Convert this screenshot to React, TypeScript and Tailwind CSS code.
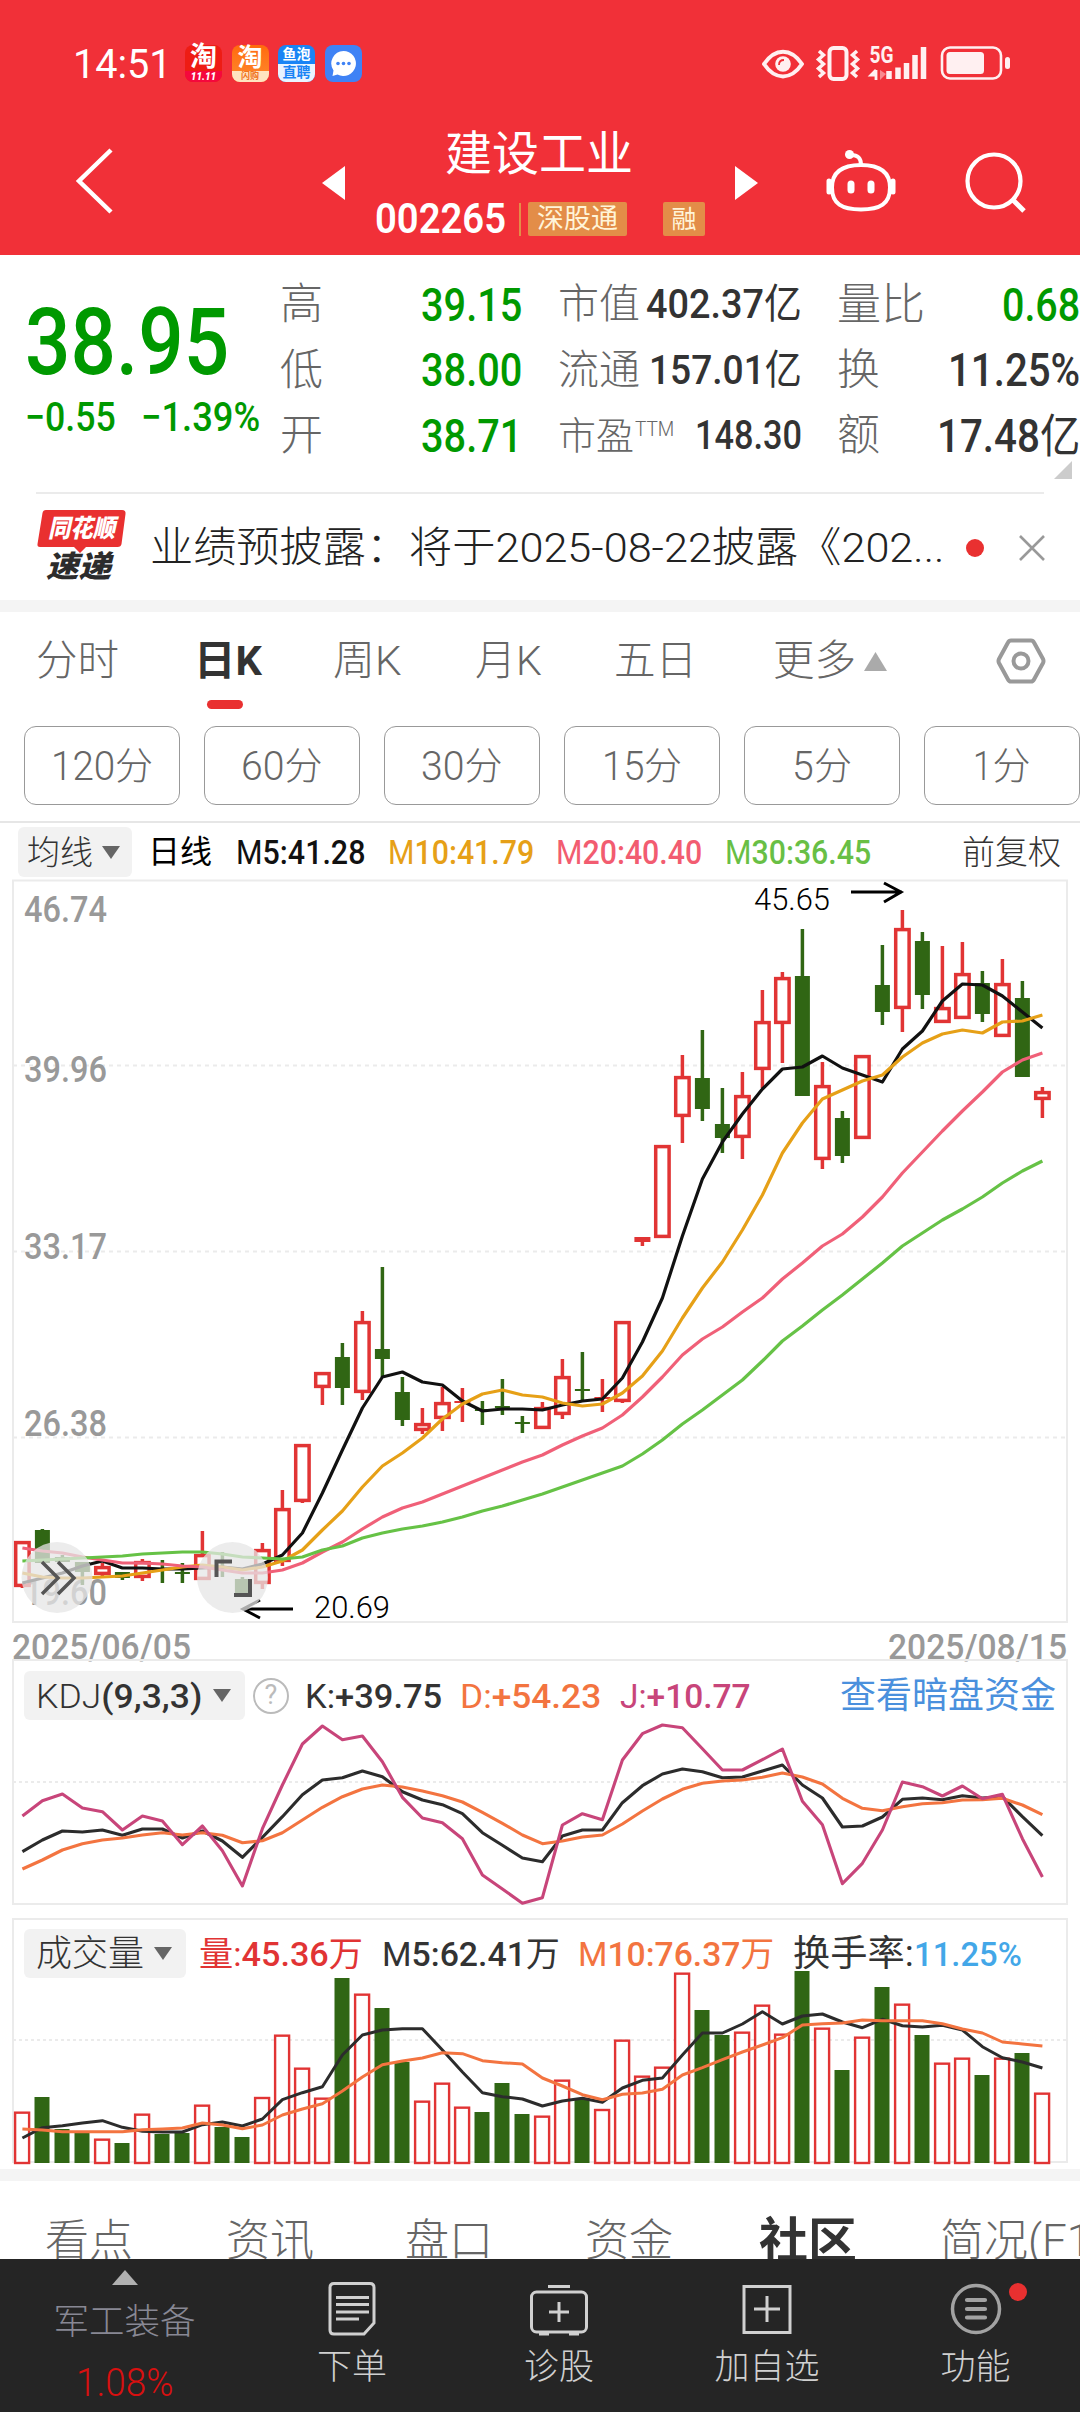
import { useLayoutEffect, useRef, useState } from 'react';
import type { ReactNode } from 'react';
import clsx from 'clsx';

// [cor, máxima, topo, base, mínima] -> r = alta, g = baixa
type Candle = ['r' | 'g', number, number, number, number];

const CANDLES: Candle[] = [
  ['r', 1541, 1541, 1587, 1588], ['g', 1529, 1530, 1563, 1563], ['g', 1555, 1557, 1562, 1562], ['g', 1562, 1562, 1572, 1585],
  ['r', 1563, 1566, 1575, 1576], ['g', 1572, 1572, 1578, 1580], ['r', 1559, 1561, 1578, 1581], ['g', 1560, 1568, 1570, 1583],
  ['g', 1563, 1572, 1574, 1583], ['r', 1531, 1554, 1580, 1580], ['g', 1552, 1561, 1563, 1577], ['g', 1577, 1579, 1594, 1594],
  ['r', 1543, 1549, 1584, 1589], ['r', 1490, 1508, 1562, 1566], ['r', 1444, 1444, 1502, 1503], ['r', 1372, 1372, 1388, 1405],
  ['g', 1343, 1357, 1388, 1405], ['r', 1311, 1321, 1393, 1400], ['g', 1267, 1349, 1359, 1377], ['g', 1377, 1392, 1420, 1426],
  ['r', 1408, 1423, 1431, 1434], ['r', 1387, 1402, 1419, 1431], ['r', 1388, 1401, 1403, 1422], ['g', 1401, 1409, 1411, 1425],
  ['g', 1379, 1406, 1408, 1415], ['g', 1416, 1422, 1424, 1433], ['r', 1402, 1407, 1429, 1429], ['r', 1359, 1376, 1415, 1419],
  ['g', 1352, 1389, 1391, 1400], ['r', 1379, 1397, 1399, 1412], ['r', 1321, 1321, 1402, 1403], ['r', 1237, 1237, 1242, 1246],
  ['r', 1145, 1145, 1238, 1238], ['r', 1055, 1076, 1117, 1143], ['g', 1030, 1078, 1109, 1121], ['g', 1088, 1124, 1138, 1153],
  ['r', 1072, 1095, 1138, 1159], ['r', 990, 1021, 1070, 1088], ['r', 972, 977, 1024, 1063], ['g', 929, 976, 1096, 1096],
  ['r', 1062, 1085, 1160, 1169], ['g', 1111, 1118, 1156, 1163], ['r', 1055, 1055, 1139, 1139], ['g', 945, 985, 1012, 1025],
  ['r', 910, 928, 1009, 1032], ['g', 932, 941, 995, 1009], ['r', 946, 1007, 1023, 1023], ['r', 942, 973, 1019, 1019],
  ['g', 971, 983, 1014, 1022], ['r', 959, 983, 1037, 1037], ['g', 981, 998, 1077, 1077], ['r', 1087, 1091, 1100, 1118],
];

const MA5 = [
  1583, 1578, 1573, 1566, 1561, 1568, 1568, 1569, 1569, 1568, 1567, 1569, 1564, 1555, 1533, 1493, 1450, 1408, 1377, 1372, 1382, 1385, 1401,
  1411, 1409, 1409, 1410, 1405, 1401, 1399, 1378, 1342, 1298, 1236, 1179, 1142, 1114, 1089, 1069, 1067, 1056, 1068, 1075, 1082, 1049, 1031,
  1001, 984, 985, 996, 1012, 1028,
];
const MA10 = [
  1573, 1577, 1578, 1578, 1577, 1576, 1573, 1570, 1567, 1565, 1567, 1570, 1567, 1561, 1550, 1530, 1511, 1487, 1466, 1453, 1438, 1419, 1404,
  1394, 1390, 1395, 1397, 1403, 1406, 1404, 1393, 1376, 1351, 1318, 1288, 1262, 1230, 1195, 1153, 1123, 1099, 1090, 1081, 1075, 1057, 1043,
  1034, 1030, 1033, 1022, 1021, 1015,
];
const MA20 = [
  1548, 1551, 1553, 1557, 1560, 1563, 1563, 1564, 1566, 1567, 1570, 1573, 1573, 1570, 1563, 1552, 1542, 1529, 1517, 1508, 1502, 1494, 1486,
  1478, 1470, 1462, 1455, 1445, 1436, 1428, 1415, 1397, 1377, 1355, 1339, 1327, 1312, 1298, 1279, 1263, 1246, 1234, 1217, 1197, 1173, 1152,
  1131, 1111, 1092, 1072, 1060, 1053,
];
const MA30 = [
  1561, 1560, 1559, 1558, 1557, 1556, 1554, 1553, 1552, 1552, 1554, 1557, 1558, 1559, 1557, 1550, 1546, 1538, 1533, 1529, 1526, 1522, 1517,
  1511, 1506, 1500, 1494, 1487, 1480, 1473, 1466, 1454, 1440, 1424, 1410, 1395, 1380, 1361, 1341, 1326, 1310, 1295, 1279, 1263, 1246, 1233,
  1220, 1209, 1197, 1183, 1171, 1161,
];

const KDJ_K = [
  635, 600, 573, 576, 570, 586, 567, 567, 594, 573, 603, 652, 592, 530, 464, 420, 413, 393, 410, 455, 480, 494, 521, 578, 616, 654, 665, 588,
  570, 570, 488, 437, 402, 387, 395, 413, 411, 393, 375, 435, 474, 561, 558, 531, 478, 474, 479, 467, 474, 470, 530, 587,
];
const KDJ_D = [
  687, 660, 630, 611, 600, 594, 585, 578, 585, 578, 586, 608, 602, 578, 540, 502, 470, 447, 435, 441, 453, 467, 486, 517, 550, 585, 611, 603,
  591, 585, 552, 513, 477, 448, 430, 423, 420, 412, 399, 411, 432, 475, 505, 512, 500, 491, 488, 480, 479, 475, 495, 524,
];
const KDJ_J = [
  528, 482, 462, 504, 515, 570, 528, 543, 614, 558, 632, 738, 566, 435, 312, 258, 299, 288, 365, 472, 534, 548, 596, 705, 747, 790, 773, 555,
  521, 539, 360, 281, 255, 263, 326, 390, 390, 359, 327, 484, 554, 731, 670, 570, 426, 440, 468, 438, 476, 463, 596, 711,
];

const VOLUME = [
  635, 591, 687, 699, 716, 729, 641, 702, 699, 614, 681, 711, 591, 404, 503, 593, 234, 281, 324, 486, 602, 548, 620, 636, 549, 642, 647, 539,
  596, 627, 419, 527, 500, 218, 330, 405, 395, 314, 401, 213, 383, 510, 410, 261, 311, 405, 488, 473, 525, 473, 459, 578,
];
const VOL_M5 = [
  714, 683, 677, 669, 662, 682, 694, 696, 696, 674, 666, 678, 657, 599, 578, 560, 465, 405, 390, 386, 386, 450, 516, 578, 590, 597, 618, 603,
  595, 607, 564, 541, 534, 465, 399, 399, 372, 335, 372, 348, 342, 366, 383, 358, 377, 381, 376, 390, 440, 473, 486, 504,
];
const VOL_M10 = [
  687, 690, 695, 695, 695, 695, 689, 687, 684, 669, 675, 686, 675, 645, 627, 611, 573, 531, 494, 483, 474, 458, 461, 482, 488, 492, 534, 558,
  584, 599, 583, 579, 568, 525, 503, 479, 456, 435, 413, 375, 371, 369, 360, 362, 362, 362, 371, 387, 399, 426, 432, 438,
];

const RED = '#e13434';
const GREEN = '#306614';

const xAt = (i: number) => 22.4 + i * 20;
const toPoints = (values: number[], y: (v: number) => number) => values.map((v, i) => `${xAt(i)},${y(v).toFixed(1)}`).join(' ');

const kdjY = (v: number) => 1640 + v / 3;
const volY = (v: number) => 1900 + v / 3;

// Comprime ou estica o texto para ocupar a largura da caixa
const Fit = ({ className, children }: { className?: string; children: ReactNode }) => {
  const box = useRef<HTMLSpanElement>(null);
  const text = useRef<HTMLSpanElement>(null);
  const [scale, setScale] = useState(1);

  useLayoutEffect(() => {
    if (box.current && text.current) {
      setScale(box.current.clientWidth / text.current.offsetWidth);
    }
  }, [children]);

  return (
    <span ref={box} className={clsx('block shrink-0 whitespace-nowrap leading-none', className)}>
      <span ref={text} className="inline-block origin-left" style={{ transform: `scaleX(${scale})` }}>
        {children}
      </span>
    </span>
  );
};

const StatusBar = () => (
  <div className="flex h-[126px] items-start pl-[73px] pt-[44px]">
    <Fit className="mt-[1px] w-[99px] text-[40px]">14:51</Fit>
    <div className="ml-[13px] flex gap-[9.5px] pt-[1px]">
      <div className="flex h-[37px] w-[37px] flex-col items-center rounded-[8px] bg-[#ee1c14]">
        <span className="h-[26px] text-[27px] font-bold leading-[25px]">淘</span>
        <span className="w-full rounded-b-[8px] bg-[#f5083c] text-center text-[10px] font-black italic leading-[11px]">11.11</span>
      </div>
      <div className="flex h-[37px] w-[37px] flex-col items-center rounded-[8px] bg-linear-to-b from-[#ff6a0c] to-[#ff8a2c]">
        <span className="h-[26px] text-[25px] font-bold leading-[25px]">淘</span>
        <span className="w-full rounded-b-[8px] bg-[#ffe3c0] text-center text-[9px] font-bold leading-[11px] text-[#f0741e]">闪购</span>
      </div>
      <div className="flex h-[37px] w-[37px] flex-col items-center rounded-[8px] bg-[#1a84f5]">
        <span className="h-[19px] text-[14px] font-bold leading-[19px]">鱼泡</span>
        <span className="h-[18px] w-full rounded-b-[8px] bg-[#eaf4ff] text-center text-[14px] font-bold leading-[17px] text-[#1a84f5]">直聘</span>
      </div>
      <div className="flex h-[37px] w-[37px] items-center justify-center rounded-[8px] bg-[#3f82f5]">
        <svg width="29" height="29" viewBox="0 0 29 29">
          <path d="M14.500 2a12.500 12.500 0 1 1-6 23.500L3.500 27l1-5.500A12.500 12.500 0 0 1 14.500 2z" fill="#fff" />
          <circle cx="9" cy="14.500" r="1.800" fill="#3f82f5" />
          <circle cx="14.500" cy="14.500" r="1.800" fill="#3f82f5" />
          <circle cx="20" cy="14.500" r="1.800" fill="#3f82f5" />
        </svg>
      </div>
    </div>
    <svg className="ml-[400.500px] shrink-0" width="250" height="40" viewBox="0 0 250 40" fill="none" stroke="#fff0f1">
      <path d="M2 20C13 3.500 29 3.500 40 20C29 36.500 13 36.500 2 20z" strokeWidth="4" strokeLinejoin="round" />
      <circle cx="21" cy="20" r="7.800" fill="#fff0f1" stroke="none" />
      <path d="M17 21c0-3 2-5 5-5" stroke="#f13038" strokeWidth="1.800" />
      <rect x="67.500" y="4" width="17" height="31" rx="4" strokeWidth="4" />
      <path d="M57 7l4.500 4-5 4.500 5 4.500-5 4.500 5 4.500-4.500 4M95 7l-4.500 4 5 4.500-5 4.500 5 4.500-5 4.500 4.500 4" strokeWidth="3.500" />
      <text x="107.500" y="18.500" textLength="24" lengthAdjust="spacingAndGlyphs" className="text-[23px] font-bold" fill="#fff0f1" stroke="none">5G</text>
      <path d="M114 26v10M114 26l-5 5h5" strokeWidth="2.800" />
      <path d="M118 26v10l6-6z" fill="#f98a8f" stroke="none" />
      <path d="M127 27v8M136 23.500v11.500M144.500 19v16M153 11v24M161.500 3v32" strokeWidth="5.500" strokeLinecap="butt" />
      <rect x="180" y="3.500" width="59" height="31" rx="8" strokeWidth="2.600" />
      <rect x="184.500" y="8" width="37.500" height="22" rx="3.500" fill="#fff0f1" stroke="none" />
      <rect x="243" y="13" width="5" height="12" rx="2.500" fill="#fff0f1" stroke="none" />
    </svg>
  </div>
);

const NavBar = () => (
  <div className="flex h-[129px] items-start">
    <svg className="ml-[74px] mt-[20px] shrink-0" width="42" height="70" viewBox="0 0 42 70" fill="none" stroke="#fff" strokeWidth="4.500">
      <path d="M37 4L5 35l32 31" />
    </svg>
    <svg className="ml-[206px] mt-[40px] shrink-0" width="23" height="34" viewBox="0 0 23 34">
      <path d="M23 0v34L0 17z" fill="#fff" />
    </svg>
    <div className="ml-[30px] mt-[1px] w-[360px] shrink-0">
      <Fit className="ml-[70px] h-[71px] w-[188px] pt-[3px] text-[47px]">建设工业</Fit>
      <div className="flex items-center">
        <Fit className="w-[131px] text-[42px] font-semibold">002265</Fit>
        <div className="ml-[13px] h-[33px] w-[2px] bg-[#e38d48]" />
        <div className="ml-[7px] flex h-[34px] w-[99px] items-center justify-center rounded-[2px] bg-[#e38d48] text-[27px] leading-none text-[#fff4d8]">深股通</div>
        <div className="ml-[36px] flex h-[34px] w-[42px] items-center justify-center rounded-[2px] bg-[#e38d48] text-[25px] leading-none text-[#fff4d8]">融</div>
      </div>
    </div>
    <svg className="mt-[40px] shrink-0" width="23" height="34" viewBox="0 0 23 34">
      <path d="M0 0v34l23-17z" fill="#fff" />
    </svg>
    <svg className="ml-[68px] mt-[22px] shrink-0" width="70" height="66" viewBox="0 0 70 66" fill="none" stroke="#fff" strokeWidth="4">
      <path d="M35 17C54 17 64 24 64 39.500C64 56 54 61.500 35 61.500C16 61.500 6 56 6 39.500C6 24 16 17 35 17z" />
      <path d="M3 33v11M67 33v11" strokeWidth="5" strokeLinecap="round" />
      <path d="M25 7c7 0 10 3 10 10" />
      <circle cx="23.500" cy="6.500" r="4.500" fill="#fff" stroke="none" />
      <path d="M25 36v6M45 36v6" strokeWidth="7" strokeLinecap="round" />
    </svg>
    <svg className="ml-[68px] mt-[25px] shrink-0" width="66" height="64" viewBox="0 0 66 64" fill="none" stroke="#fff" strokeWidth="4.200">
      <circle cx="30" cy="30" r="26.500" />
      <path d="M49 49L60 60" strokeWidth="5" />
    </svg>
  </div>
);

const Quote = () => (
  <section className="flex h-[237px]">
    <div className="w-[280px] shrink-0 pl-[25px] pt-[41px] text-[#009900]">
      <Fit className="w-[204px] text-[93px] font-medium">38.95</Fit>
      <div className="mt-[9px] flex">
        <Fit className="w-[91px] text-[40px] font-medium">−0.55</Fit>
        <Fit className="ml-[25px] w-[119px] text-[40px] font-medium">−1.39%</Fit>
      </div>
    </div>
    <div className="flex w-[242px] shrink-0 flex-col gap-[22.500px] pt-[28px]">
      {[['高', '39.15'], ['低', '38.00'], ['开', '38.71']].map(([label, value]) => (
        <div key={label} className="flex h-[43px] items-center justify-between">
          <span className="text-[43px] font-light leading-none text-[#666]">{label}</span>
          <Fit className="w-[101px] text-[46px] font-medium text-[#009900]">{value}</Fit>
        </div>
      ))}
    </div>
    <div className="ml-[36px] flex w-[244px] shrink-0 flex-col gap-[22.500px] pt-[28px] text-[#333]">
      <div className="flex h-[43px] items-center justify-between">
        <span className="text-[41px] font-light leading-none text-[#666]">市值</span>
        <Fit className="w-[156px] text-[41px] font-medium">402.37<span className="font-normal">亿</span></Fit>
      </div>
      <div className="flex h-[43px] items-center justify-between">
        <span className="text-[41px] font-light leading-none text-[#666]">流通</span>
        <Fit className="w-[153px] text-[41px] font-medium">157.01<span className="font-normal">亿</span></Fit>
      </div>
      <div className="flex h-[43px] items-center">
        <span className="text-[38px] font-light leading-none text-[#666]">市盈</span>
        <Fit className="mb-[14px] ml-[1px] w-[39px] text-[20px] font-light text-[#666]">TTM</Fit>
        <Fit className="ml-auto w-[107px] text-[41px] font-medium">148.30</Fit>
      </div>
    </div>
    <div className="relative ml-[35px] flex w-[243px] shrink-0 flex-col gap-[22.500px] pt-[28px] text-[#333]">
      <div className="flex h-[43px] items-center justify-between">
        <span className="text-[44px] font-light leading-none text-[#666]">量比</span>
        <Fit className="w-[78px] text-[46px] font-medium text-[#009900]">0.68</Fit>
      </div>
      <div className="flex h-[43px] items-center justify-between">
        <span className="text-[43px] font-light leading-none text-[#666]">换</span>
        <Fit className="w-[132px] text-[46px] font-medium">11.25%</Fit>
      </div>
      <div className="flex h-[43px] items-center justify-between">
        <span className="text-[43px] font-light leading-none text-[#666]">额</span>
        <Fit className="w-[143px] text-[46px] font-medium">17.48<span className="font-normal">亿</span></Fit>
      </div>
      <svg className="absolute right-[8px] top-[206px]" width="18" height="18" viewBox="0 0 18 18">
        <path d="M18 0v18H0z" fill="#ccc" />
      </svg>
    </div>
  </section>
);

const NewsRow = () => (
  <section>
    <div className="mx-[36px] h-[2px] bg-[#ebebeb]" />
    <div className="flex h-[106px] items-center">
      <div className="relative ml-[37px] h-[76px] w-[90px] shrink-0">
        <svg className="absolute inset-0" width="90" height="74" viewBox="0 0 90 74">
          <path d="M9 1h76q4 0 3.500 4l-4 30q-.5 3-4 3H49l-6 6-6-6H3q-3 0-2.500-3l5-31q.5-3 3.500-3z" fill="#e93030" />
        </svg>
        <div className="relative pl-[11px] pt-[7px] text-white">
          <Fit className="w-[67px] text-[25px] font-black italic">同花顺</Fit>
        </div>
        <div className="relative pl-[9px] pt-[11px] text-[#2c2c2c]">
          <Fit className="w-[65px] text-[30px] font-black italic">速递</Fit>
        </div>
      </div>
      <Fit className="ml-[23px] mt-[1px] w-[794px] text-[41.500px] font-light text-[#222]">业绩预披露：将于2025-08-22披露《202...</Fit>
      <div className="ml-[22px] mt-[1px] h-[18px] w-[18px] rounded-full bg-[#e93030]" />
      <svg className="ml-[34px] mt-[1px] shrink-0" width="28" height="28" viewBox="0 0 28 28" stroke="#999" strokeWidth="2.600">
        <path d="M2 2l24 24M26 2L2 26" />
      </svg>
    </div>
  </section>
);

const PeriodTabs = () => (
  <section className="h-[211px] border-b-2 border-[#e6e6e6]">
    <div className="flex h-[96px] items-center pt-[2px] text-[41.500px] font-light leading-none text-[#666]">
      <span className="ml-[36px]">分时</span>
      <div className="relative ml-[75px]">
        <Fit className="w-[68px] font-bold text-[#333]">日K</Fit>
        <div className="absolute left-[13px] top-[60px] h-[9px] w-[36px] rounded-full bg-[#e93030]" />
      </div>
      <Fit className="ml-[71px] w-[69px]">周K</Fit>
      <Fit className="ml-[73px] w-[67px]">月K</Fit>
      <span className="ml-[72px]">五日</span>
      <span className="ml-[76px]">更多</span>
      <svg className="ml-[8px]" width="23" height="19" viewBox="0 0 23 19">
        <path d="M11.500 0L23 19H0z" fill="#aaa" />
      </svg>
      <svg className="ml-[108px]" width="52" height="48" viewBox="0 0 52 48" fill="none" stroke="#999" strokeWidth="4">
        <path d="M16 3.500h20q2 0 3 2l9 16.500q1 2 0 4l-9 16.500q-1 2-3 2H16q-2 0-3-2L4 26q-1-2 0-4L13 5.500q1-2 3-2z" />
        <circle cx="26" cy="24" r="7.500" />
      </svg>
    </div>
    <div className="ml-[24px] mt-[18px] flex gap-[24px]">
      {[
        ['120', 'w-[64px]'],
        ['60', 'w-[43px]'],
        ['30', 'w-[43px]'],
        ['15', 'w-[42px]'],
        ['5', 'w-[22px]'],
        ['1', 'w-[19px]'],
      ].map(([n, width]) => (
        <div key={n} className="flex h-[79px] w-[156px] shrink-0 items-center justify-center rounded-[12px] border-[1.500px] border-[#999] pt-[1px] text-[#666]">
          <Fit className={clsx('text-[41px] font-light', width)}>{n}</Fit>
          <span className="text-[38px] font-light leading-none">分</span>
        </div>
      ))}
    </div>
  </section>
);

const Caret = () => (
  <svg className="shrink-0" width="18" height="13" viewBox="0 0 18 13">
    <path d="M0 0h18L9 13z" fill="#666" />
  </svg>
);

const MaBar = () => (
  <div className="flex h-[56px] items-center pt-[2px] text-[33px] leading-none">
    <div className="ml-[18px] flex h-[50px] w-[114px] items-center gap-[9px] rounded-[6px] bg-[#f2f2f2] pl-[9px] text-[#333]">
      <span className="font-light">均线</span>
      <Caret />
    </div>
    <span className="ml-[16px] text-[32px]">日线</span>
    <Fit className="ml-[24px] w-[129px] font-medium text-[#111]"><span className="font-normal">M</span>5:41.28</Fit>
    <Fit className="ml-[23px] w-[146px] font-medium text-[#e6a017]"><span className="font-normal">M</span>10:41.79</Fit>
    <Fit className="ml-[22px] w-[146px] font-medium text-[#f25c70]"><span className="font-normal">M</span>20:40.40</Fit>
    <Fit className="ml-[23px] w-[146px] font-medium text-[#68bf45]"><span className="font-normal">M</span>30:36.45</Fit>
    <span className="ml-[91px] font-light text-[#333]">前复权</span>
  </div>
);

const AXIS = [
  { value: '46.74', y: 922 },
  { value: '39.96', y: 1082 },
  { value: '33.17', y: 1259 },
  { value: '26.38', y: 1436 },
  { value: '19.60', y: 1605 },
];

const KLineChart = () => (
  <svg className="block overflow-visible" width="1080" height="780" viewBox="0 879 1080 780" fill="none">
    <path d="M13 880.500H1067V1622H13z" stroke="#ebebeb" strokeWidth="2" />
    <path d="M13 1065.500H1067M13 1251.500H1067M13 1437.500H1067" stroke="#ebebeb" strokeWidth="2" strokeDasharray="4 4" />
    {AXIS.map(({ value, y }) => (
      <text key={value} x="24" y={y} textLength="83" lengthAdjust="spacingAndGlyphs" fill="#999" className="text-[36px] font-medium">{value}</text>
    ))}
    {CANDLES.map(([color, high, top, bottom, low], i) => {
      const x = xAt(i);
      const flat = bottom - top < 6;
      if (color === 'g') {
        return (
          <g key={i} fill={GREEN}>
            <rect x={x - 1.75} y={high} width="3.500" height={low - high} />
            <rect x={x - 7.5} y={top} width="15" height={bottom - top} />
          </g>
        );
      }
      return (
        <g key={i} stroke={RED} strokeWidth="3.500">
          <path d={flat ? `M${x} ${high}V${low}` : `M${x} ${high}V${top}M${x} ${bottom}V${low}`} />
          {flat
            ? <rect x={x - 8} y={top} width="16" height={bottom - top} fill={RED} stroke="none" />
            : <rect x={x - 6.7} y={top + 1.6} width="13.400" height={bottom - top - 3.2} fill="#fff" />}
        </g>
      );
    })}
    <g strokeWidth="3.200" strokeLinejoin="round">
      <polyline points={toPoints(MA5, (v) => v)} stroke="#111" />
      <polyline points={toPoints(MA10, (v) => v)} stroke="#e6a017" />
      <polyline points={toPoints(MA20, (v) => v)} stroke="#f06078" />
      <polyline points={toPoints(MA30, (v) => v)} stroke="#66c246" />
    </g>
    <g stroke="#000" strokeWidth="3">
      <path d="M851 892H902M884 883L901 892L884 902" />
      <path d="M293 1609H243M260 1600L243 1609L260 1618" />
    </g>
    <text x="754" y="910" textLength="76" lengthAdjust="spacingAndGlyphs" fill="#000" className="text-[31px] font-light">45.65</text>
    <text x="314" y="1618" textLength="76" lengthAdjust="spacingAndGlyphs" fill="#000" className="text-[31px] font-light">20.69</text>
    <g fill="#e6e6e6" fillOpacity=".75">
      <circle cx="57" cy="1577.500" r="35.500" />
      <circle cx="232.500" cy="1577.500" r="35.500" />
    </g>
    <g stroke="#555" strokeWidth="3.500">
      <path d="M42 1562L58 1578L42 1594M58 1562L74 1578L58 1594" />
      <path d="M216.500 1577V1561.500H232M234 1595H250V1579" strokeWidth="4" />
    </g>
    <text x="12" y="1659" textLength="179" lengthAdjust="spacingAndGlyphs" fill="#999" className="text-[35px] font-medium">2025/06/05</text>
    <text x="888" y="1659" textLength="179" lengthAdjust="spacingAndGlyphs" fill="#999" className="text-[35px] font-medium">2025/08/15</text>
  </svg>
);

const KdjPanel = () => (
  <section className="relative h-[259px]">
    <div className="relative z-10 flex h-[72px] items-center pt-px text-[34px] leading-none">
      <div className="ml-[24px] flex h-[49px] w-[221px] items-center rounded-[6px] bg-[#f2f2f2] pl-[12px] text-[#333]">
        <Fit className="w-[166px] font-medium"><span className="font-light">KDJ</span>(9,3,3)</Fit>
        <span className="ml-[11px]"><Caret /></span>
      </div>
      <div className="ml-[8px] flex h-[36px] w-[36px] items-center justify-center rounded-full border-[2.500px] border-[#bbb] text-[27px] text-[#bbb]">?</div>
      <Fit className="ml-[16px] w-[137px] font-medium text-[#333]"><span className="font-normal">K:</span>+39.75</Fit>
      <Fit className="ml-[18px] w-[141px] font-medium text-[#f37440]"><span className="font-normal">D:</span>+54.23</Fit>
      <Fit className="ml-[19px] w-[131px] font-medium text-[#c8457a]"><span className="font-normal">J:</span>+10.77</Fit>
      <Fit className="ml-[89px] w-[216px] text-[36px] text-[#4a90dd]">查看暗盘资金</Fit>
    </div>
    <svg className="absolute left-0 top-0" width="1080" height="259" viewBox="0 1659 1080 259" fill="none">
      <path d="M13 1660H1067V1904H13z" stroke="#ebebeb" strokeWidth="2" />
      <path d="M13 1782H1067" stroke="#ebebeb" strokeWidth="2" strokeDasharray="3 3" />
      <g strokeWidth="3.100" strokeLinejoin="round">
        <polyline points={toPoints(KDJ_K, kdjY)} stroke="#2c2c2c" />
        <polyline points={toPoints(KDJ_D, kdjY)} stroke="#f37440" />
        <polyline points={toPoints(KDJ_J, kdjY)} stroke="#c8457a" />
      </g>
    </svg>
  </section>
);

const VolumePanel = () => (
  <section className="relative h-[251px]">
    <div className="relative z-10 flex h-[70px] items-center pt-px text-[34px] leading-none text-[#333]">
      <div className="ml-[24px] flex h-[49px] w-[162px] items-center gap-[10px] rounded-[6px] bg-[#f2f2f2] pl-[12px]">
        <span className="text-[36px] font-light">成交量</span>
        <Caret />
      </div>
      <Fit className="ml-[13px] w-[164px] font-medium text-[#e13434]"><span className="font-normal">量:</span>45.36<span className="font-normal">万</span></Fit>
      <Fit className="ml-[19px] w-[178px] font-medium"><span className="font-normal">M</span>5:62.41<span className="font-normal">万</span></Fit>
      <Fit className="ml-[18px] w-[196px] font-medium text-[#f37440]"><span className="font-normal">M</span>10:76.37<span className="font-normal">万</span></Fit>
      <Fit className="ml-[19px] w-[121px] text-[36px]">换手率:</Fit>
      <Fit className="w-[108px] font-medium text-[#43a7e8]">11.25%</Fit>
    </div>
    <svg className="absolute left-0 top-0" width="1080" height="251" viewBox="0 1918 1080 251" fill="none">
      <path d="M13 1919H1067V2162H13z" stroke="#ebebeb" strokeWidth="2" />
      <path d="M13 2040H1067" stroke="#ebebeb" strokeWidth="2" strokeDasharray="3 3" />
      {VOLUME.map((v, i) => {
        const top = volY(v);
        return CANDLES[i][0] === 'g'
          ? <rect key={i} x={xAt(i) - 7.9} y={top} width="15" height={2163 - top} fill={GREEN} />
          : <rect key={i} x={xAt(i) - 7.3} y={top + 1} width="14" height={2162 - top} fill="#fff" stroke={RED} strokeWidth="2.400" />;
      })}
      <g strokeWidth="3" strokeLinejoin="round">
        <polyline points={toPoints(VOL_M5, volY)} stroke="#2c2c2c" />
        <polyline points={toPoints(VOL_M10, volY)} stroke="#f37440" />
      </g>
    </svg>
  </section>
);

const ContentTabs = () => (
  <section className="flex h-[78px] items-start overflow-hidden pl-[45px] pt-[38px] text-[44px] font-light leading-none text-[#666]">
    <span className="shrink-0">看点</span>
    <span className="ml-[93px] shrink-0">资讯</span>
    <span className="ml-[91px] shrink-0">盘口</span>
    <span className="ml-[92px] shrink-0">资金</span>
    <span className="-mt-[2px] ml-[86px] shrink-0 text-[49px] font-bold text-[#333]">社区</span>
    <span className="ml-[83px] shrink-0 whitespace-nowrap">简况(F10)</span>
  </section>
);

const BottomBar = () => (
  <nav className="flex h-[153px] bg-[#252525] text-[35px] font-light leading-none text-[#d0d0d0]">
    <div className="flex w-[249px] flex-col items-center pt-[11px]">
      <svg width="26" height="15" viewBox="0 0 26 15">
        <path d="M13 0l13 15H0z" fill="#b0b0b0" />
      </svg>
      <span className="mt-[20px] text-[35.500px] text-[#888894]">军工装备</span>
      <Fit className="mt-[23px] w-[97px] text-[38px] text-[#d81010]">1.08%</Fit>
    </div>
    <div className="flex w-[206px] flex-col items-center pt-[22px]">
      <svg width="50" height="56" viewBox="0 0 50 56" fill="none" stroke="#d0d0d0" strokeWidth="3">
        <path d="M7 2.500h36q4 0 4 4V42L37 53H7q-4 0-4-4V6.500q0-4 4-4z" />
        <path d="M9 16.500h33M9 23.500h33M9 31h33M9 38h23" />
      </svg>
      <span className="mt-[13px]">下单</span>
    </div>
    <div className="flex w-[208px] flex-col items-center pt-[24px]">
      <svg width="60" height="54" viewBox="0 0 60 54" fill="none" stroke="#d0d0d0" strokeWidth="3">
        <path d="M19 3.500h22" />
        <rect x="2.500" y="9" width="55" height="40" rx="5" />
        <path d="M30 19v20M20 29h20M10 51h10M40 51h10" />
      </svg>
      <span className="mt-[13px]">诊股</span>
    </div>
    <div className="flex w-[208px] flex-col items-center pt-[25px]">
      <svg width="50" height="50" viewBox="0 0 50 50" fill="none" stroke="#d0d0d0" strokeWidth="3">
        <rect x="2" y="2.500" width="46" height="46" />
        <path d="M25 12v26M12 25h26" />
      </svg>
      <span className="mt-[16px]">加自选</span>
    </div>
    <div className="relative flex w-[209px] flex-col items-center pt-[24px]">
      <svg width="52" height="52" viewBox="0 0 52 52" fill="none" stroke="#a2a2a2" strokeWidth="3.500">
        <circle cx="26" cy="26" r="23.500" />
        <path d="M17 17h18M17 26h18M17 34.500h18" strokeWidth="4.200" strokeLinecap="round" />
      </svg>
      <div className="absolute left-[138px] top-[24px] h-[18px] w-[18px] rounded-full bg-[#e93030]" />
      <span className="mt-[15px]">功能</span>
    </div>
  </nav>
);

export default function App() {
  return (
    <main className="h-[2412px] w-[1080px] overflow-hidden bg-white font-[Roboto,'Noto_Sans_CJK_SC',sans-serif]">
      <header className="h-[255px] bg-[#f13038] text-white">
        <StatusBar />
        <NavBar />
      </header>
      <Quote />
      <NewsRow />
      <div className="h-[12px] bg-[#f4f4f4]" />
      <PeriodTabs />
      <div className="h-[56px]"><MaBar /></div>
      <KLineChart />
      <KdjPanel />
      <VolumePanel />
      <div className="h-[12px] bg-[#f4f4f4]" />
      <ContentTabs />
      <BottomBar />
    </main>
  );
}
